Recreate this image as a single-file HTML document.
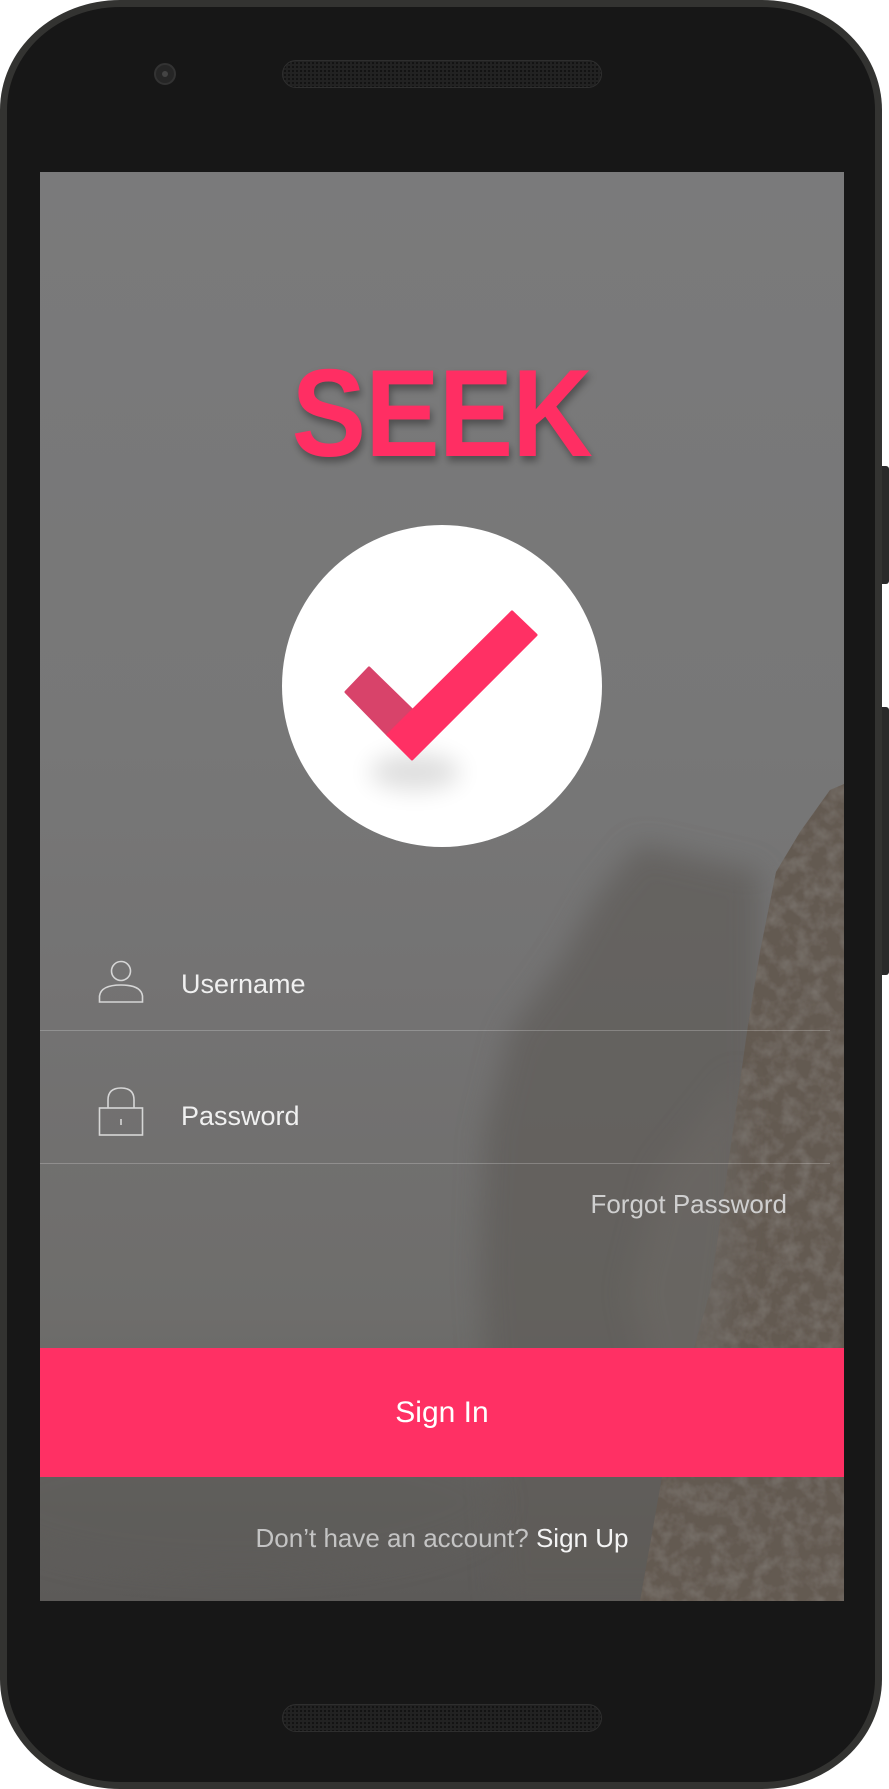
<!DOCTYPE html>
<html><head><meta charset="utf-8"><style>
html,body{margin:0;padding:0;background:#fff;}
body{width:889px;height:1789px;position:relative;overflow:hidden;font-family:"Liberation Sans",sans-serif;}
.abs{position:absolute;}
</style></head><body>
<div class="abs" style="left:872px;top:466px;width:17px;height:118px;background:#2a2a2a;border-radius:3px;"></div>
<div class="abs" style="left:872px;top:707px;width:17px;height:268px;background:#2a2a2a;border-radius:3px;"></div>
<div class="abs" style="left:0;top:0;width:882px;height:1789px;background:#333331;border-radius:120px/110px;"></div>
<div class="abs" style="left:7px;top:7px;width:868px;height:1775px;background:#171717;border-radius:113px/103px;"></div>
<div class="abs" style="left:154px;top:63px;width:22px;height:22px;border-radius:50%;background:#262626;border:2px solid #333;box-sizing:border-box;"></div>
<div class="abs" style="left:162px;top:71px;width:6px;height:6px;border-radius:50%;background:#444;"></div>
<div class="abs" style="left:282px;top:60px;width:320px;height:28px;border-radius:14px;background:#222;border:1px solid #2e2e2e;box-sizing:border-box;background-image:radial-gradient(#111 35%,transparent 40%);background-size:4px 4px;"></div>
<div class="abs" style="left:282px;top:1704px;width:320px;height:28px;border-radius:14px;background:#222;border:1px solid #2e2e2e;box-sizing:border-box;background-image:radial-gradient(#111 35%,transparent 40%);background-size:4px 4px;"></div>
<div class="abs" style="left:40px;top:172px;width:804px;height:1429px;overflow:hidden;background:linear-gradient(180deg,#7a7a7b 0%,#777777 40%,#737272 60%,#6e6d6b 80%,#5c5a58 100%);">
  <svg class="abs" style="left:0;top:0" width="804" height="1429" viewBox="0 0 804 1429">
    <defs>
      <filter id="b1" x="-50%" y="-50%" width="200%" height="200%"><feGaussianBlur stdDeviation="14"/></filter>
      <filter id="tx" x="-10%" y="-10%" width="120%" height="120%">
        <feTurbulence type="fractalNoise" baseFrequency="0.07" numOctaves="3" seed="3" result="n"/>
        <feColorMatrix in="n" type="matrix" values="0 0 0 0 0.22  0 0 0 0 0.20  0 0 0 0 0.18  0 0 0 1.2 -0.45" result="c"/>
        <feComposite in="c" in2="SourceGraphic" operator="in" result="t"/>
        <feMerge><feMergeNode in="SourceGraphic"/><feMergeNode in="t"/></feMerge>
      </filter>
    </defs>
    <path d="M599 672 L560 720 L520 790 L470 860 L445 960 L440 1100 L460 1429 L720 1429 L720 700 Z" fill="#5f5c58" filter="url(#b1)" opacity="0.7"/>
    <path d="M804 612 L790 618 L760 660 L736 700 L720 780 L707 860 L690 980 L670 1120 L630 1260 L600 1429 L804 1429 Z" fill="#645a51" filter="url(#tx)"/>
    <path d="M700 900 L620 1000 L590 1120 L620 1250 L680 1200 L700 1050 Z" fill="#6e6a66" filter="url(#b1)" opacity="0.5"/>
    <ellipse cx="200" cy="1330" rx="260" ry="70" fill="#5d5b59" filter="url(#b1)" opacity="0.5"/>
  </svg>
  <div class="abs" style="left:0;width:804px;top:180px;text-align:center;">
    <span style="display:inline-block;font-weight:bold;font-size:124px;line-height:124px;color:#ff2e63;transform:scaleX(0.9);letter-spacing:-1px;text-shadow:2px 5px 8px rgba(0,0,0,0.35);">SEEK</span>
  </div>
  <div class="abs" style="left:242px;top:353px;width:320px;height:322px;border-radius:50%;background:#fff;"></div>
  <svg class="abs" style="left:0;top:0" width="804" height="900" viewBox="40 172 804 900">
    <defs><filter id="sh" x="-100%" y="-200%" width="300%" height="500%"><feGaussianBlur stdDeviation="12"/></filter></defs>
    <ellipse cx="415" cy="772" rx="45" ry="18" fill="#000" opacity="0.13" filter="url(#sh)"/>
    <path d="M369 668 L412 710 L388 735 L346 692 Z" fill="#d8436a" stroke="#d8436a" stroke-width="3" stroke-linejoin="round"/>
    <path d="M512 612 L536 635 L412 759 L388 735 Z" fill="#ff3064" stroke="#ff3064" stroke-width="3" stroke-linejoin="round"/>
  </svg>
  <svg class="abs" style="left:55px;top:788px" width="50" height="50" viewBox="0 0 50 50">
    <circle cx="26" cy="11" r="9.5" fill="none" stroke="#d6d6d6" stroke-width="1.6"/>
    <path d="M4.5 42 L4.5 36 Q6 25 26 25 Q46 25 47.5 36 L47.5 42 Z" fill="none" stroke="#d6d6d6" stroke-width="1.6"/>
  </svg>
  <div class="abs" style="left:141px;top:796px;font-size:27px;line-height:32px;color:#f0f0f0;">Username</div>
  <div class="abs" style="left:0;top:858px;width:790px;height:1px;background:rgba(255,255,255,0.22);"></div>
  <svg class="abs" style="left:55px;top:912px" width="50" height="54" viewBox="0 0 50 54">
    <path d="M13 24 L13 16 Q13 4 26 4 Q39 4 39 16 L39 24" fill="none" stroke="#d6d6d6" stroke-width="1.6"/>
    <rect x="4.5" y="24" width="43" height="27" fill="none" stroke="#d6d6d6" stroke-width="1.6"/>
    <line x1="26" y1="35" x2="26" y2="41" stroke="#d6d6d6" stroke-width="1.6"/>
  </svg>
  <div class="abs" style="left:141px;top:928px;font-size:27px;line-height:32px;color:#f0f0f0;">Password</div>
  <div class="abs" style="left:0;top:991px;width:790px;height:1px;background:rgba(255,255,255,0.22);"></div>
  <div class="abs" style="right:57px;top:1017px;font-size:26px;line-height:30px;color:#cfcfcf;">Forgot Password</div>
  <div class="abs" style="left:0;top:1176px;width:804px;height:129px;background:#ff3064;color:#fff;font-size:30px;line-height:129px;text-align:center;">Sign In</div>
  <div class="abs" style="left:0;width:804px;top:1350px;text-align:center;font-size:26px;line-height:32px;color:#c4c4c4;">Don’t have an account? <span style="color:#f4f4f4;">Sign Up</span></div>
</div>
</body></html>
